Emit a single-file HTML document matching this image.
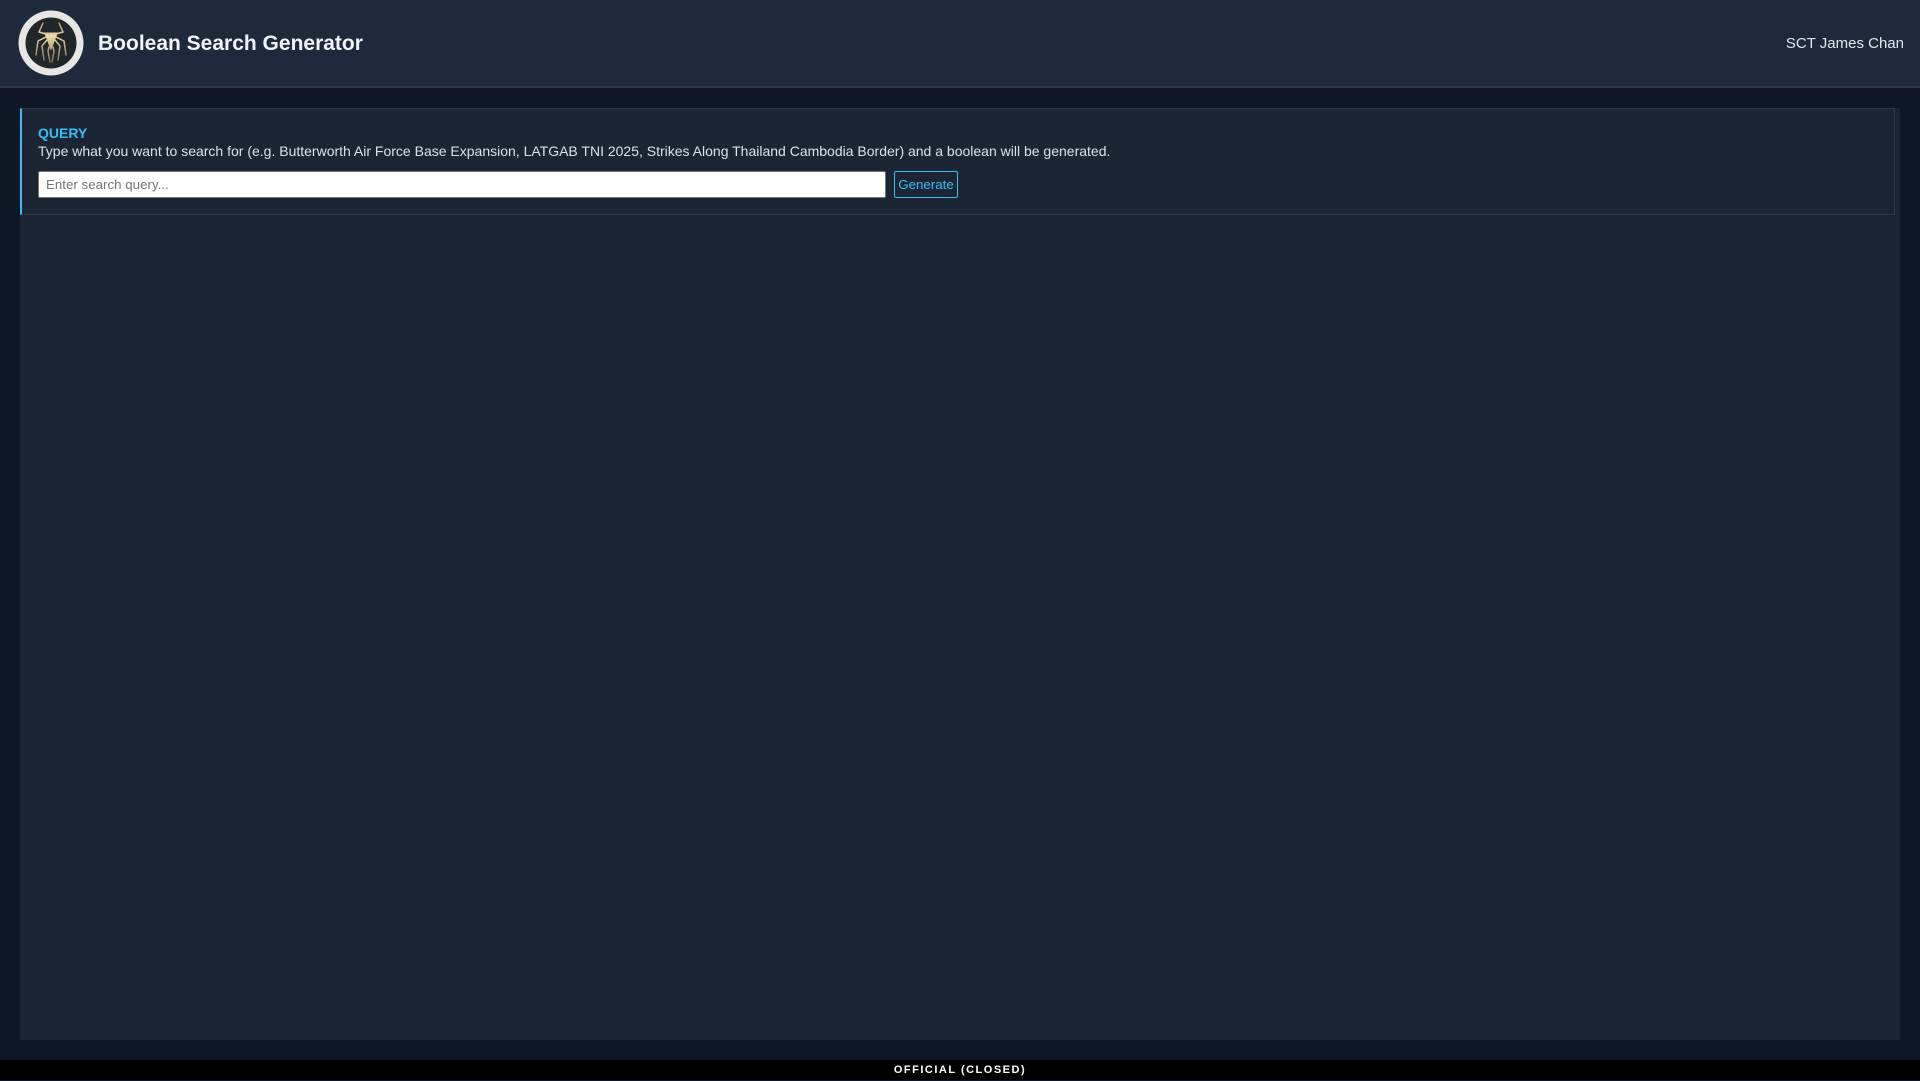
<!DOCTYPE html>
<html lang="en">
<head>
<meta charset="utf-8">
<title>Boolean Search Generator</title>
<style>
*{box-sizing:border-box;margin:0;padding:0}
html,body{width:1920px;height:1080px;overflow:hidden;background:#0f1625;font-family:"Liberation Sans",Arial,sans-serif}
.abs{position:absolute;white-space:nowrap}
#header{left:0;top:0;width:1920px;height:88px;background:#1e293b;border-bottom:2px solid #2f3a4c}
#logo{left:18px;top:10px;width:66px;height:66px}
#title{left:98px;top:31px;font-size:21px;line-height:25px;font-weight:700;color:#f1f5f9}
#user{right:16px;top:35px;font-size:15px;line-height:18px;color:#e2e8f0}
#panel{left:20px;top:108px;width:1880px;height:932px;background:#1b2432}
#card{left:20px;top:108px;width:1875px;height:107px;background:#1c2533;border:1px solid #2d3747;border-left:2px solid #38bdf8}
#q{left:38px;top:125px;font-size:14px;line-height:16px;font-weight:700;color:#38bdf8}
#desc{left:38px;top:143px;font-size:14px;line-height:16px;color:#dbe1e9}
#input{left:38px;top:171px;width:848px;height:27px;background:#fff;border:1px solid #767676;border-radius:2px;padding-left:7px;font-size:13.33px;line-height:25px;color:#757575}
#btn{left:894px;top:171px;width:64px;height:27px;border:1px solid #38bdf8;border-radius:2px;font-size:13.33px;line-height:25px;text-align:center;color:#38bdf8}
#footer{left:0;top:1060px;width:1920px;height:20px;background:#000;color:#fff;text-align:center;font-size:11px;line-height:21px;font-weight:700;letter-spacing:1.5px}
</style>
</head>
<body>
<div id="header" class="abs"></div>
<svg id="logo" class="abs" viewBox="0 0 66 66">
<defs><linearGradient id="g" gradientUnits="userSpaceOnUse" x1="0" y1="12" x2="0" y2="52"><stop offset="0" stop-color="#a8966c"/><stop offset=".35" stop-color="#ecd9a8"/><stop offset="1" stop-color="#7d6f55"/></linearGradient></defs>
<circle cx="33" cy="33" r="32.5" fill="#e6e6e4"/>
<circle cx="33" cy="33" r="25.5" fill="#21262a"/>
<g fill="none" stroke="url(#g)" stroke-width="1.5" stroke-linecap="round" stroke-linejoin="round">
<path d="M28 24 L21 22 L25 13"/><path d="M38 24 L45 22 L41 13"/>
<path d="M28 27 L20 31 L18 45"/><path d="M38 27 L46 31 L48 45"/>
<path d="M29 30 L24 36 L26 50"/><path d="M37 30 L42 36 L40 50"/>
<path d="M31 37 L30 41 L32 52"/><path d="M35 37 L36 41 L34 52"/>
</g>
<path d="M26 22.5 L40 22.5 L37 30 L33 41 L29 30 Z" fill="url(#g)"/>
</svg>
<div id="title" class="abs">Boolean Search Generator</div>
<div id="user" class="abs">SCT James Chan</div>
<div id="panel" class="abs"></div>
<div id="card" class="abs"></div>
<div id="q" class="abs">QUERY</div>
<div id="desc" class="abs">Type what you want to search for (e.g. Butterworth Air Force Base Expansion, LATGAB TNI 2025, Strikes Along Thailand Cambodia Border) and a boolean will be generated.</div>
<div id="input" class="abs">Enter search query...</div>
<div id="btn" class="abs">Generate</div>
<div id="footer" class="abs">OFFICIAL (CLOSED)</div>
</body>
</html>
